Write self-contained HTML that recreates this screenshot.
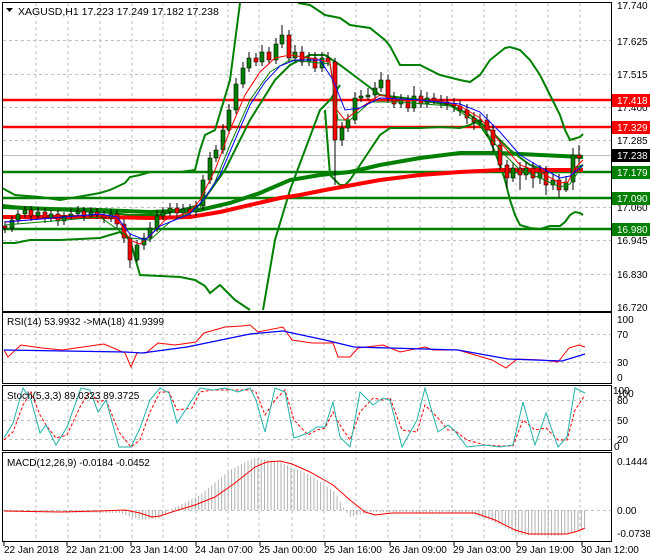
<!DOCTYPE html>
<html><head><meta charset="utf-8"><style>
html,body{margin:0;padding:0;background:#fff;width:650px;height:560px;overflow:hidden}
svg{display:block;font-family:"Liberation Sans",sans-serif;font-size:10px}
</style></head><body>
<svg width="650" height="560" viewBox="0 0 650 560" xmlns="http://www.w3.org/2000/svg">
<defs>
<pattern id="st" width="3.3" height="10" patternUnits="userSpaceOnUse"><rect x="0" y="0" width="1" height="10" fill="#b0b0b0"/></pattern>
</defs>
<rect width="650" height="560" fill="#fff"/>
<g stroke="#c0c0c0" stroke-dasharray="3,3" stroke-width="1" fill="none">
<path d="M36,3V311M68,3V311M100,3V311M132,3V311M163,3V311M196,3V311M228,3V311M259,3V311M292,3V311M324,3V311M356,3V311M388,3V311M420,3V311M452,3V311M484,3V311M516,3V311M548,3V311M580,3V311"/>
<path d="M36,313V541M68,313V541M100,313V541M132,313V541M163,313V541M196,313V541M228,313V541M259,313V541M292,313V541M324,313V541M356,313V541M388,313V541M420,313V541M452,313V541M484,313V541M516,313V541M548,313V541M580,313V541"/>
<path d="M3,40.5H611M3,74.5H611M3,107.5H611M3,140.5H611M3,207.5H611M3,240.5H611M3,274.5H611"/>
<path d="M3,334.5H611M3,362.5H611M3,400.5H611M3,420.5H611M3,439.5H611M3,510.5H611"/>
</g>
<path d="M3,155.5H611" stroke="#c0c0c0"/>
<g fill="none" stroke-width="2.5">
<path d="M3,100H611M3,127H611" stroke="#ff0000"/>
<path d="M3,172H611M3,198H611M3,229H611" stroke="#008000"/>
</g>
<g fill="none" stroke="#008000" stroke-width="2">
<polyline points="2,188 15,195 40,197 60,200 100,193 110,190 125,183 130,177 140,175 150,172 180,172 195,170 200,150 205,135 215,130 230,80 240,3"/>
<polyline points="298,3 310,5 325,15 340,18 350,25 370,28 385,40 390,46 400,65 420,65 440,75 460,80 470,82 480,75 490,60 505,48 510,47 520,50 530,60 540,75 550,95 560,115 565,130 570,140 580,137 583,134"/>
<polyline points="2,243 15,243 30,240 60,240 100,238 120,232 130,240 140,275 160,276 180,277 195,280 205,286 210,293 220,285 235,300 250,310"/>
<polyline points="263,310 275,240 290,190 305,150 320,110 330,100 340,85"/>
<polyline points="325,110 330,175 340,185 345,185 350,180 360,165 370,150 380,135 390,128 420,128 440,127 460,128 470,125 475,122 480,125 490,140 500,165 505,180 510,200 515,215 520,225 530,228 540,229 550,226 560,226 565,222 570,215 575,212 580,213 583,215"/>
<polyline points="2,205 50,210 100,212 130,215 160,215 200,205 225,170 250,120 275,80 290,65 310,55 325,55 340,65 360,80 380,95 420,100 450,105 470,115 490,130 510,150 530,165 550,172 570,170 583,165"/>
</g>
<polyline fill="none" stroke="#008000" stroke-width="4" points="2,207 50,209 100,210 150,212 200,210 230,203 260,193 290,180 320,175 350,172 380,165 420,158 460,153 500,153 540,155 583,157"/>
<polyline fill="none" stroke="#ff0000" stroke-width="4" points="2,217 100,217 150,218 190,217 220,212 250,205 280,198 300,195 325,190 380,180 420,175 460,172 500,170 583,170"/>
<path stroke="#000" fill="none" d="M5,221V233M12,216V232M18,210V224M25,206V218M31,206V221M38,207V219M45,208V223M51,210V222M58,210V226M64,212V225M71,209V219M78,206V216M84,207V221M91,207V217M97,208V219M104,211V223M111,209V222M117,210V228M124,219V243M130,233V268M137,240V262M144,233V250M150,222V242M157,210V232M163,207V220M170,203V216M177,203V218M183,204V217M190,204V216M196,201V216M203,175V210M210,152V184M216,145V162M223,124V154M229,104V134M236,78V114M243,62V88M249,52V72M256,53V66M262,45V66M269,47V64M276,38V64M282,25V48M289,30V62M295,45V62M302,46V66M309,52V66M315,52V72M322,52V72M328,52V66M335,58V185M342,122V146M348,114V132M355,92V124M361,90V102M368,88V100M375,82V99M381,72V92M388,75V103M394,92V108M401,94V108M408,95V112M414,86V112M421,90V108M427,92V108M434,93V104M441,95V108M447,96V110M454,98V112M460,100V116M467,104V124M474,112V130M480,114V126M487,114V136M493,124V152M500,140V170M507,160V188M513,162V182M520,162V190M526,162V180M533,162V188M540,165V184M546,166V195M553,174V190M559,174V198M566,176V192M573,148V190M579,145V165"/>
<path fill="#008000" stroke="#000" stroke-width="0.6" d="M10,220h4v8h-4zM16,214h4v6h-4zM23,210h4v4h-4zM36,212h4v4h-4zM49,214h4v4h-4zM62,216h4v5h-4zM69,214h4v2h-4zM76,211h4v3h-4zM89,212h4v4h-4zM109,214h4v4h-4zM135,245h4v15h-4zM142,238h4v7h-4zM148,228h4v10h-4zM155,216h4v12h-4zM161,212h4v4h-4zM168,208h4v4h-4zM181,209h4v4h-4zM194,206h4v6h-4zM201,180h4v26h-4zM208,158h4v22h-4zM214,150h4v8h-4zM221,130h4v20h-4zM227,110h4v20h-4zM234,84h4v26h-4zM241,68h4v16h-4zM247,58h4v10h-4zM260,52h4v10h-4zM274,44h4v16h-4zM280,35h4v9h-4zM293,52h4v6h-4zM307,58h4v4h-4zM320,58h4v10h-4zM340,128h4v12h-4zM346,120h4v8h-4zM353,98h4v22h-4zM359,96h4v2h-4zM366,95h4v2h-4zM373,88h4v7h-4zM379,80h4v8h-4zM399,100h4v4h-4zM412,96h4v12h-4zM425,98h4v6h-4zM478,120h4v2h-4zM511,168h4v10h-4zM524,168h4v7h-4zM538,172h4v6h-4zM551,180h4v5h-4zM564,182h4v8h-4zM571,155h4v27h-4z"/>
<path fill="#ff0000" stroke="#000" stroke-width="0.6" d="M3,226h4v2h-4zM29,210h4v6h-4zM43,212h4v6h-4zM56,214h4v7h-4zM82,211h4v5h-4zM95,212h4v3h-4zM102,215h4v3h-4zM115,214h4v10h-4zM122,224h4v14h-4zM128,238h4v22h-4zM175,208h4v5h-4zM188,209h4v3h-4zM254,58h4v4h-4zM267,52h4v8h-4zM287,35h4v23h-4zM300,52h4v10h-4zM313,58h4v10h-4zM326,58h4v4h-4zM333,62h4v78h-4zM386,80h4v18h-4zM392,98h4v6h-4zM406,100h4v8h-4zM419,96h4v8h-4zM432,98h4v2h-4zM439,100h4v2h-4zM445,102h4v2h-4zM452,104h4v2h-4zM458,106h4v4h-4zM465,110h4v8h-4zM472,118h4v4h-4zM485,120h4v10h-4zM491,130h4v15h-4zM498,145h4v20h-4zM505,165h4v13h-4zM518,168h4v7h-4zM531,168h4v10h-4zM544,172h4v13h-4zM557,180h4v10h-4zM577,155h4v3h-4z"/>
<g fill="none" stroke-width="1">
<polyline stroke="#008000" points="5,225 100,217 130,238 150,240 170,222 200,208 215,182 230,145 250,100 270,72 290,60 330,64 338,120 350,120 370,102 400,102 450,106 480,124 500,150 520,170 540,178 560,187 570,184 583,165"/>
<polyline stroke="#ff0000" points="5,222 100,214 117,218 130,240 140,244 150,236 165,220 190,212 200,200 215,170 230,130 245,95 260,72 275,58 290,55 310,58 330,62 337,110 345,120 360,108 380,95 400,100 440,101 460,106 480,118 500,142 520,165 540,172 560,183 568,182 575,168 583,160"/>
<polyline stroke="#0000ff" points="5,222 100,214 117,217 130,234 145,240 160,226 190,214 205,198 220,175 235,140 250,105 265,82 280,66 295,60 320,60 333,80 345,110 360,108 380,98 420,100 460,104 480,112 500,132 520,155 540,167 560,178 570,176 583,165"/>
</g>
<g fill="none" stroke="#000">
<rect x="2.5" y="2.5" width="609" height="309"/>
<rect x="2.5" y="312.5" width="609" height="71"/>
<rect x="2.5" y="385.5" width="609" height="65"/>
<rect x="2.5" y="452.5" width="609" height="89"/>
</g>
<g stroke="#000"><path d="M4,542v4M67,542v4M131,542v4M196,542v4M260,542v4M325,542v4M390,542v4M454,542v4M517,542v4M582,542v4"/></g>
<path d="M6,8h7l-3.5,4z" fill="#000"/>
<text x="18" y="15" font-size="10.5">XAGUSD,H1  17.223 17.249 17.182 17.238</text>
<g font-size="10">
<text x="617" y="9">17.740</text><text x="617" y="45">17.625</text><text x="617" y="78">17.515</text>
<text x="617" y="111">17.400</text><text x="617" y="144">17.285</text><text x="617" y="211">17.060</text>
<text x="617" y="244">16.945</text><text x="617" y="278">16.830</text><text x="617" y="311">16.720</text>
<rect x="612" y="94" width="38" height="13" fill="#ff0000"/><text x="617" y="104" fill="#fff">17.418</text>
<rect x="612" y="121" width="38" height="13" fill="#ff0000"/><text x="617" y="131" fill="#fff">17.329</text>
<rect x="612" y="149" width="38" height="13" fill="#000"/><text x="617" y="159" fill="#fff">17.238</text>
<rect x="612" y="166" width="38" height="13" fill="#008000"/><text x="617" y="176" fill="#fff">17.179</text>
<rect x="612" y="192" width="38" height="13" fill="#008000"/><text x="617" y="202" fill="#fff">17.090</text>
<rect x="612" y="223" width="38" height="13" fill="#008000"/><text x="617" y="233" fill="#fff">16.980</text>
<text x="617" y="323">100</text><text x="617" y="338">70</text><text x="617" y="366">30</text><text x="617" y="381">0</text>
<text x="613" y="394">100</text><text x="617" y="397">100</text><text x="617" y="404">80</text><text x="617" y="424">50</text><text x="617" y="443">20</text><text x="614" y="450">0</text>
<text x="617" y="465">0.1444</text><text x="617" y="514">0.00</text><text x="617" y="537">-0.0738</text>
</g>
<g font-size="10">
<text x="4" y="553">22 Jan 2018</text><text x="66" y="553">22 Jan 21:00</text><text x="130" y="553">23 Jan 14:00</text>
<text x="195" y="553">24 Jan 07:00</text><text x="259" y="553">25 Jan 00:00</text><text x="324" y="553">25 Jan 16:00</text>
<text x="389" y="553">26 Jan 09:00</text><text x="453" y="553">29 Jan 03:00</text><text x="516" y="553">29 Jan 19:00</text>
<text x="581" y="553">30 Jan 12:00</text>
</g>
<text x="7" y="325">RSI(14) 53.9932  -&gt;MA(18) 41.9399</text>
<polyline fill="none" stroke="#ff0000" points="4,350 8,357 21,345 42,348 62,350 104,344 125,353 131,367 137,353 146,353 158,343 175,345 196,342 204,333 225,327 242,326 250,325 258,332 283,327 292,340 312,343 333,343 338,357 350,357 358,348 383,345 400,352 425,347 433,350 458,350 475,355 492,360 506,368 517,359 542,360 558,362 569,348 579,345 585,347"/>
<polyline fill="none" stroke="#0000ff" stroke-width="1.3" points="4,350 125,352 142,353 187,347 250,334 283,331 325,340 354,347 458,350 508,359 562,361 585,354"/>
<polyline fill="none" stroke="#ff0000" stroke-dasharray="3,2" points="4,440 13,432 23,405 31,392 40,415 46,425 56,438 67,435 81,405 90,392 98,402 106,400 119,432 131,447 140,440 150,412 160,392 169,392 177,410 192,408 200,392 213,390 225,390 238,390 250,390 256,392 265,415 275,400 285,390 294,420 308,435 317,430 325,428 333,412 340,425 350,440 360,412 373,398 383,400 390,398 402,430 417,432 425,405 438,418 448,430 454,430 467,440 485,445 500,446 513,446 523,420 535,430 546,428 558,440 567,440 575,410 585,395"/>
<polyline fill="none" stroke="#20b2aa" points="4,438 13,423 23,388 31,400 40,433 46,425 56,445 67,427 81,388 90,390 98,412 106,400 119,447 131,447 140,428 150,400 160,388 169,393 177,423 192,400 200,388 213,390 225,388 238,392 250,388 256,400 265,432 275,388 285,392 294,438 308,433 317,427 325,427 333,402 340,437 350,447 360,392 373,405 383,398 390,400 402,447 417,420 425,388 438,432 448,425 454,430 467,447 485,445 500,447 513,445 523,402 535,445 546,413 558,447 567,437 575,388 585,393"/>
<text x="7" y="399">Stoch(5,3,3) 89.0323 89.3725</text>
<polygon fill="url(#st)" points="4,510 4,512 120,513 140,520 160,518 170,510 200,495 230,470 254,458 280,462 310,475 335,492 345,510 350,517 370,512 470,513 490,520 520,535 560,536 580,530 586,527 586,510"/>
<polyline fill="none" stroke="#ff0000" points="4,511 60,512 100,511 125,510 140,513 152,517 160,516 175,511 195,505 215,497 235,483 255,467 267,462 280,461 292,464 310,472 333,485 350,500 365,512 375,515 392,513 475,513 495,520 515,530 529,534 567,534 578,531 585,528"/>
<text x="7" y="466">MACD(12,26,9) -0.0184 -0.0452</text>
</svg>
</body></html>
